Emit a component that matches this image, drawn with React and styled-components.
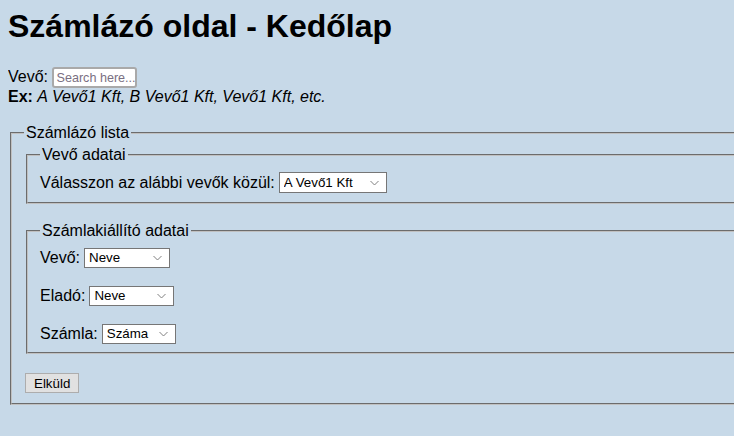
import React from "react";
import styled, { createGlobalStyle } from "styled-components";

const GlobalStyle = createGlobalStyle`
  html {
    overflow: hidden;
    background-color: #c7d9e8;
  }
  body {
    margin: 8px;
    width: 1000px;
    font-family: "Liberation Sans", Arial, sans-serif;
    font-size: 16px;
    color: #000;
  }
`;

const Title = styled.h1`
  font-size: 32px;
  font-weight: bold;
  margin: 0 0 21px 0;
`;

const SearchLine = styled.div`
  line-height: 22px;
`;

const SearchInput = styled.input`
  width: 85px;
  height: 21px;
  box-sizing: border-box;
  padding: 0 0 0 2px;
  font-family: "Liberation Sans", Arial, sans-serif;
  font-size: 12.6px;
  border: 2px solid #a9a9a9;
  border-radius: 3px;
  background: #fff;
  vertical-align: middle;
  &::placeholder {
    color: #7a6f82;
  }
`;

const Example = styled.div`
  line-height: 18px;
  margin-bottom: 18px;
`;

const Form = styled.form`
  width: 900px;
`;

const Fieldset = styled.fieldset`
  margin: 0 2px;
  padding: ${(p) => p.$top}px 12px ${(p) => p.$bottom}px;
  border: 2px groove #c0c0c0;
  legend {
    padding: 0 2px;
  }
`;

const Rows = styled.div`
  display: flex;
  flex-direction: column;
  gap: 17px;
`;

const Row = styled.div`
  display: flex;
  align-items: center;
  gap: 4px;
  height: 21px;
`;

const SelectWrap = styled.span`
  position: relative;
  display: inline-flex;
  width: ${(p) => p.$w}px;
  height: ${(p) => p.$h}px;
  svg {
    position: absolute;
    right: 8px;
    top: 50%;
    margin-top: -3px;
    pointer-events: none;
  }
`;

const Select = styled.select`
  appearance: none;
  width: 100%;
  height: 100%;
  box-sizing: border-box;
  font-family: "Liberation Sans", Arial, sans-serif;
  font-size: 13.33px;
  color: #000;
  background: #fff;
  border: 1px solid #767676;
  border-radius: 0;
  padding: 0 18px 0 4px;
  outline: none;
`;

const Spacer = styled.div`
  height: ${(p) => p.$h}px;
`;

const Button = styled.button`
  font-family: "Liberation Sans", Arial, sans-serif;
  font-size: 13.33px;
  height: 20px;
  padding: 0 8px;
  margin-left: 1px;
  background: #e1e1e1;
  border: 1px solid #adadad;
  color: #000;
`;

const Chevron = () => (
  <svg width="9" height="6" viewBox="0 0 9 6">
    <path d="M0.5 1 L4.5 5 L8.5 1" fill="none" stroke="#808080" strokeWidth="1" />
  </svg>
);

const Dropdown = ({ w, h = 20, options }) => (
  <SelectWrap $w={w} $h={h}>
    <Select>
      {options.map((o) => (
        <option key={o}>{o}</option>
      ))}
    </Select>
    <Chevron />
  </SelectWrap>
);

export default function App() {
  return (
    <>
      <GlobalStyle />
      <Title>Számlázó oldal - Kedőlap</Title>
      <SearchLine>
        Vevő: <SearchInput type="text" placeholder="Search here..." />
      </SearchLine>
      <Example>
        <b>Ex:</b> <i>A Vevő1 Kft, B Vevő1 Kft, Vevő1 Kft, etc.</i>
      </Example>
      <Form onSubmit={(e) => e.preventDefault()}>
        <Fieldset $top={4} $bottom={10}>
          <legend>Számlázó lista</legend>
          <Fieldset $top={8} $bottom={9}>
            <legend>Vevő adatai</legend>
            <Row>
              Válasszon az alábbi vevők közül:
              <Dropdown w={108} h={21} options={["A Vevő1 Kft", "B Vevő1 Kft", "Vevő1 Kft"]} />
            </Row>
          </Fieldset>
          <Spacer $h={18} />
          <Fieldset $top={7} $bottom={8}>
            <legend>Számlakiállító adatai</legend>
            <Rows>
              <Row>
                Vevő:
                <Dropdown w={86} options={["Neve"]} />
              </Row>
              <Row>
                Eladó:
                <Dropdown w={85} options={["Neve"]} />
              </Row>
              <Row>
                Számla:
                <Dropdown w={74} options={["Száma"]} />
              </Row>
            </Rows>
          </Fieldset>
          <Spacer $h={19} />
          <Button type="submit">Elküld</Button>
        </Fieldset>
      </Form>
    </>
  );
}
